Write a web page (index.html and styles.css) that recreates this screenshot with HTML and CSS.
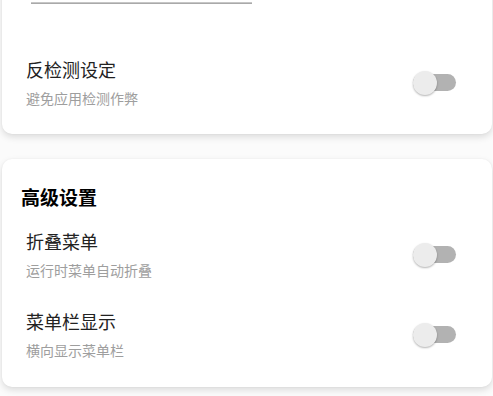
FILE: index.html
```html
<!DOCTYPE html>
<html lang="zh-CN">
<head>
    <meta charset="UTF-8">
    <meta name="viewport" content="width=device-width, initial-scale=1.0">
    <title>设置</title>
    <link rel="stylesheet" href="styles.css">
</head>
<body>
    <div class="page">
        <!-- 上一个卡片（已滚出顶部） -->
        <section class="card card-cut">
            <div class="field"><div class="field-line"></div></div>

            <div class="row">
                <div class="row-text">
                    <div class="row-title">反检测设定</div>
                    <div class="row-sub">避免应用检测作弊</div>
                </div>
                <label class="switch"><input type="checkbox"><span class="track"></span><span class="thumb"></span></label>
            </div>
        </section>

        <!-- 高级设置 -->
        <section class="card">
            <h2 class="card-title">高级设置</h2>

            <div class="row">
                <div class="row-text">
                    <div class="row-title">折叠菜单</div>
                    <div class="row-sub">运行时菜单自动折叠</div>
                </div>
                <label class="switch"><input type="checkbox"><span class="track"></span><span class="thumb"></span></label>
            </div>

            <div class="row">
                <div class="row-text">
                    <div class="row-title">菜单栏显示</div>
                    <div class="row-sub">横向显示菜单栏</div>
                </div>
                <label class="switch"><input type="checkbox"><span class="track"></span><span class="thumb"></span></label>
            </div>
        </section>
    </div>
</body>
</html>
```

FILE: styles.css
```css
* { margin: 0; padding: 0; box-sizing: border-box; }
html, body { height: 100%; overflow: hidden; }
body { font-family: "Noto Sans CJK SC", "Noto Sans", sans-serif; background: #fbfbfb; color: #212121; }
.page { padding: 0 1px 0 2px; }

.card { background: #fff; border-radius: 10px; box-shadow: 0 3px 7px rgba(0, 0, 0, 0.13), 0 0 2px rgba(0, 0, 0, 0.05); padding: 25px 0 12px; margin-bottom: 25px; }
.card-cut { margin-top: -32px; padding: 0 0 11px; }

.field { padding: 34px 0 0 29px; margin-bottom: 39px; }
.field-line { width: 221px; height: 2px; background: #a9a9a9; border-top: 1px solid #c6c6c6; }

.card-title { font-size: 19px; line-height: 26px; font-weight: bold; color: #000; padding-left: 19px; margin-bottom: 5px; }

.row { display: flex; align-items: center; justify-content: space-between; padding: 14px 36px 15px 24px; height: 80px; }
.row-title { font-size: 18px; line-height: 24px; color: #222; }
.row-sub { font-size: 14px; line-height: 20px; color: #9e9e9e; margin-top: 7px; }

/* 开关 */
.switch { position: relative; width: 43px; height: 24px; cursor: pointer; }
.switch input { position: absolute; opacity: 0; }
.track { position: absolute; left: 0; top: 3px; width: 43px; height: 17px; border-radius: 9px; background: #b2b2b2; }
.thumb { position: absolute; left: 0; top: 0; width: 24px; height: 24px; border-radius: 50%; background: #ececec; box-shadow: 0 1px 2px rgba(0, 0, 0, 0.3); }
```
